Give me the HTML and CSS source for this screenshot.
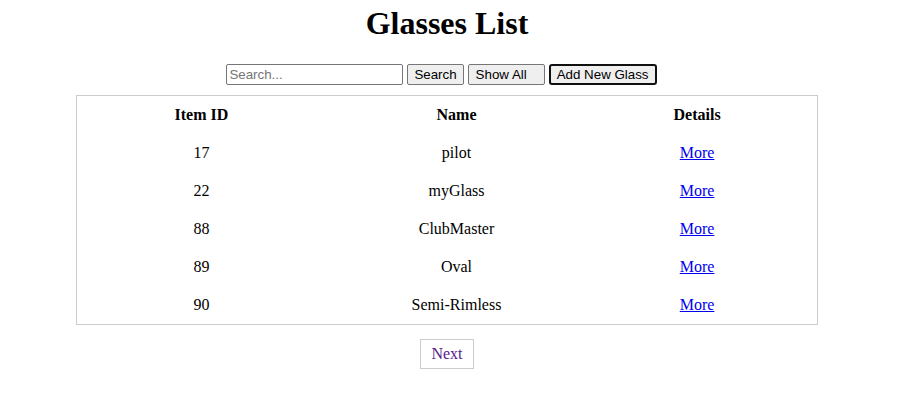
FILE: index.html
```html
<!DOCTYPE html>
<html>
<head>
<meta charset="utf-8">
<title>Glasses List</title>
<link rel="stylesheet" href="styles.css">
</head>
<body>
<div class="page">
  <h1 class="title">Glasses List</h1>
  <div class="controls">
    <input class="search" type="text" placeholder="Search...">
    <button class="btn">Search</button>
    <button class="btn btn-show">Show All</button>
    <button class="btn btn-focus">Add New Glass</button>
  </div>
  <table class="list">
    <colgroup>
      <col class="w1"><col class="w2"><col class="w3">
    </colgroup>
    <thead>
      <tr><th class="c1">Item ID</th><th class="c2">Name</th><th class="c3">Details</th></tr>
    </thead>
    <tbody>
      <tr><td class="c1">17</td><td class="c2">pilot</td><td class="c3"><a href="#">More</a></td></tr>
      <tr><td class="c1">22</td><td class="c2">myGlass</td><td class="c3"><a href="#">More</a></td></tr>
      <tr><td class="c1">88</td><td class="c2">ClubMaster</td><td class="c3"><a href="#">More</a></td></tr>
      <tr><td class="c1">89</td><td class="c2">Oval</td><td class="c3"><a href="#">More</a></td></tr>
      <tr><td class="c1">90</td><td class="c2">Semi-Rimless</td><td class="c3"><a href="#">More</a></td></tr>
    </tbody>
  </table>
  <div class="pager"><a class="next" href="#">Next</a></div>
</div>
</body>
</html>
```
FILE: styles.css
```css
html, body {
  margin: 0;
  padding: 0;
  background: #fff;
}
body {
  font-family: "Liberation Serif", "Times New Roman", serif;
  font-size: 16px;
  color: #000;
}
.page {
  width: 878px;
  margin-left: 8px;
  padding-top: 5px;
  display: flex;
  flex-direction: column;
  align-items: center;
}
.title {
  font-size: 32px;
  font-weight: bold;
  margin: 0 0 21px 0;
  line-height: 37px;
}
.controls {
  display: flex;
  align-items: center;
  gap: 4px;
  height: 22px;
  margin-right: 11px;
}
.search {
  box-sizing: border-box;
  width: 177px;
  height: 21px;
  font-family: "Liberation Sans", Arial, sans-serif;
  font-size: 13.33px;
  border: 1px solid #767676;
  border-radius: 2px;
  padding: 1px 2px;
  margin: 0;
}
.search::placeholder {
  color: #757575;
}
.btn {
  box-sizing: border-box;
  height: 21px;
  font-family: "Liberation Sans", Arial, sans-serif;
  font-size: 13.33px;
  background: #efefef;
  border: 1px solid #767676;
  border-radius: 2px;
  padding: 1px 6px;
  margin: 0;
  color: #000;
}
.btn-show {
  width: 77px;
  text-align: left;
  padding-left: 7px;
}
.btn-focus {
  border: 2px solid #101010;
  border-radius: 3px;
  width: 108px;
  height: 21px;
  padding: 0 5px;
}
.list {
  margin-top: 10px;
  width: 742px;
  border: 1px solid #ccc;
  border-collapse: collapse;
  table-layout: fixed;
}
.w1 { width: 252px; }
.w2 { width: 258px; }
.w3 { width: 230px; }
.list th, .list td {
  box-sizing: border-box;
  padding: 10px 0;
  text-align: center;
  line-height: 18px;
}
.list .c1 { padding-right: 3px; }
.list .c2 { padding-right: 3px; }
.list .c3 { padding-right: 10px; }
.list a {
  color: #0000ee;
  text-decoration: underline;
}
.pager {
  margin-top: 14px;
}
.next {
  display: inline-block;
  border: 1px solid #ccc;
  padding: 5px 10px;
  line-height: 18px;
  color: #551a8b;
  text-decoration: none;
}
```
